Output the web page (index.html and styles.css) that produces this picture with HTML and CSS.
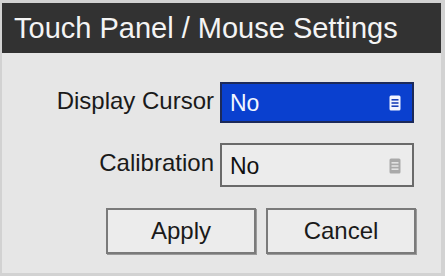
FILE: index.html
```html
<!DOCTYPE html>
<html lang="en">
<head>
    <meta charset="UTF-8">
    <meta name="viewport" content="width=device-width, initial-scale=1.0">
    <title>Touch Panel / Mouse Settings</title>
    <link rel="stylesheet" href="styles.css">
</head>
<body>
    <div class="dialog">
        <div class="title-bar">Touch Panel / Mouse Settings</div>

        <div class="dialog-body">
            <div class="field-row">
                <div class="field-label">Display Cursor</div>
                <div class="select select-active">
                    <span class="select-value">No</span>
                    <svg class="list-icon" width="12" height="16" viewBox="0 0 12 16">
                        <rect x="0.5" y="0.5" width="11" height="15" rx="1.5" fill="#f2f4ff"/>
                        <rect x="2.5" y="4" width="7" height="1.6" fill="#1a3fb8"/>
                        <rect x="2.5" y="7.2" width="7" height="1.6" fill="#1a3fb8"/>
                        <rect x="2.5" y="10.4" width="7" height="1.6" fill="#1a3fb8"/>
                    </svg>
                </div>
            </div>

            <div class="field-row">
                <div class="field-label">Calibration</div>
                <div class="select select-tall">
                    <span class="select-value">No</span>
                    <svg class="list-icon" width="12" height="16" viewBox="0 0 12 16">
                        <rect x="0.5" y="0.5" width="11" height="15" rx="1.5" fill="#a9a9a9"/>
                        <rect x="2.5" y="4" width="7" height="1.6" fill="#e2e2e2"/>
                        <rect x="2.5" y="7.2" width="7" height="1.6" fill="#e2e2e2"/>
                        <rect x="2.5" y="10.4" width="7" height="1.6" fill="#e2e2e2"/>
                    </svg>
                </div>
            </div>

            <div class="button-row">
                <button class="dialog-button">Apply</button>
                <button class="dialog-button">Cancel</button>
            </div>
        </div>
    </div>
</body>
</html>
```

FILE: styles.css
```css
* {
    margin: 0;
    padding: 0;
    box-sizing: border-box;
}

body {
    font-family: 'Liberation Sans', Arial, sans-serif;
    background: #d4d4d4;
}

.dialog {
    width: 445px;
    height: 276px;
    padding: 3px 4px 3px 2px;
    background: #d2d2d2;
    display: flex;
    flex-direction: column;
}

.title-bar {
    height: 50px;
    background: #323232;
    color: #f4f4f4;
    font-size: 29px;
    line-height: 50px;
    padding-left: 12px;
    white-space: nowrap;
}

.dialog-body {
    flex: 1;
    background: #e6e6e6;
    padding: 29px 27px 0 0;
    display: flex;
    flex-direction: column;
    gap: 20px;
}

.field-row {
    display: flex;
    justify-content: flex-end;
    align-items: center;
}

.field-label {
    font-size: 24px;
    color: #1a1a1a;
    margin-right: 6px;
    margin-top: -4px;
}

.select {
    width: 194px;
    height: 41px;
    display: flex;
    align-items: center;
    justify-content: space-between;
    padding: 0 11px 0 8px;
    background: #ececec;
    border: 2px solid #6a6a6a;
    color: #111;
}

.select-tall {
    height: 44px;
}

.select-active {
    background: #0a40cf;
    border-color: #1c2a5a;
    color: #f2f6ff;
}

.select-value {
    font-size: 23px;
    margin-top: 2px;
}

.list-icon {
    display: block;
    margin-top: 1px;
}

.button-row {
    display: flex;
    justify-content: flex-end;
    gap: 10px;
    margin-right: -2px;
    margin-top: 1px;
}

.dialog-button {
    width: 150px;
    height: 46px;
    font-family: 'Liberation Sans', Arial, sans-serif;
    font-size: 24px;
    color: #1a1a1a;
    background: #ececec;
    border: 2px solid #7a7a7a;
    box-shadow: 1px 1px 0 #9a9a9a;
}
```
